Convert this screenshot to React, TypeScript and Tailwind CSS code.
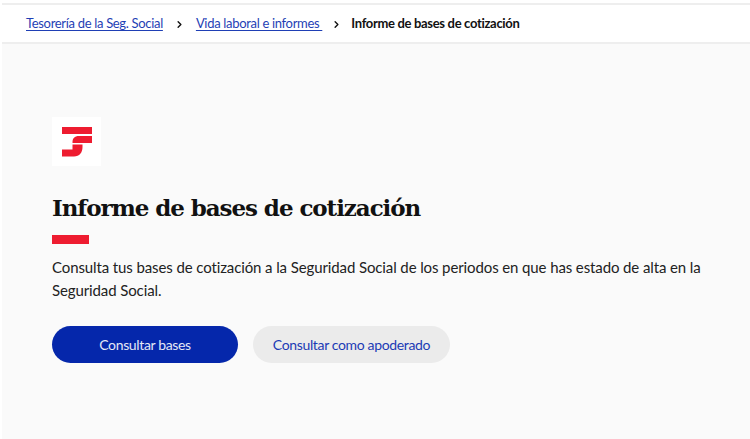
import { ChevronRight } from "lucide-react";

function Crumb({ children }: { children: React.ReactNode }) {
  return (
    <a href="#" className="text-[#1f3fb5] underline decoration-1 underline-offset-2 whitespace-pre">
      {children}
    </a>
  );
}

function Separator() {
  return <ChevronRight className="h-[11px] w-[11px] text-[#111]" strokeWidth={3} />;
}

function Logo() {
  return (
    <div className="flex h-[49px] w-[49px] items-center justify-center bg-white">
      <svg width="32" height="30" viewBox="0 0 32 30" fill="#ee1c30">
        <rect x="1" y="0" width="30" height="7" />
        <path d="M31 9 H18 C13.5 9 11.5 11.5 11.5 15 V16 H31 Z" />
        <path d="M11.5 17.5 H21.5 V20 C21.5 25.5 18.5 29.5 13 29.5 H1 V22.5 H11.5 Z" />
      </svg>
    </div>
  );
}

export default function App() {
  return (
    <div className="flex h-[439px] w-[750px] flex-col overflow-hidden bg-white pt-[3px] pl-[2px] font-['Lato',sans-serif]">
      <nav className="flex h-[41px] items-center border-y-2 border-[#eeeeee] bg-white pl-[24px] pt-[1px] text-[13px] tracking-[-0.32px]">
        <Crumb>Tesorería de la Seg. Social</Crumb>
        <span className="mx-[11px] flex"><Separator /></span>
        <Crumb>Vida laboral e informes </Crumb>
        <span className="ml-[9px] mr-[9px] flex"><Separator /></span>
        <span className="font-bold text-[#111]">Informe de bases de cotización</span>
      </nav>
      <main className="flex flex-1 flex-col items-start bg-[#fafafa] pl-[50px] pr-[40px] pt-[73px]">
        <Logo />
        <h1 className="mt-[24px] font-['DejaVu_Serif',serif] text-[23px] font-bold leading-[36px] tracking-[-1.07px] text-[#111]">
          Informe de bases de cotización
        </h1>
        <div className="mt-[9px] h-[9px] w-[37px] bg-[#ee1c30]" />
        <p className="mt-[12px] text-[15px] leading-[23px] tracking-[-0.11px] text-[#222]">
          Consulta tus bases de cotización a la Seguridad Social de los periodos en que has estado de alta en la Seguridad Social.
        </p>
        <div className="mt-[24px] flex gap-[15px] text-[14px] tracking-[-0.35px]">
          <button className="h-[37px] w-[186px] rounded-full bg-[#0527ab] text-[#e4e8f6]">Consultar bases</button>
          <button className="h-[37px] w-[197px] rounded-full bg-[#ebebeb] text-[#1c3bb5]">Consultar como apoderado</button>
        </div>
      </main>
    </div>
  );
}
